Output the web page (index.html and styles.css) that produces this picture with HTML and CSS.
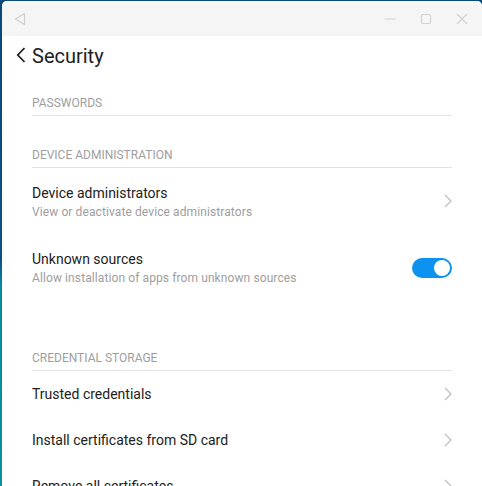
FILE: index.html
```html
<!DOCTYPE html>
<html lang="en">
<head>
  <meta charset="UTF-8">
  <title>Security</title>
  <link rel="stylesheet" href="styles.css">
</head>
<body>

<div class="window">
  <div class="titlebar">
    <svg class="tb-back" width="12" height="14" viewBox="0 0 12 14">
      <path d="M10.5 1.5 L1.5 7 L10.5 12.5 Z" fill="none" stroke="#cfcfcf" stroke-width="1.2" stroke-linejoin="round"/>
    </svg>
    <div class="tb-controls">
      <svg width="12" height="12" viewBox="0 0 12 12"><path d="M0.5 6 H11.5" stroke="#d2d2d2" stroke-width="1.2"/></svg>
      <svg width="12" height="12" viewBox="0 0 12 12"><rect x="1.5" y="1.5" width="9" height="9" rx="1.5" fill="none" stroke="#d2d2d2" stroke-width="1.2"/></svg>
      <svg width="12" height="12" viewBox="0 0 12 12"><path d="M1 1 L11 11 M11 1 L1 11" stroke="#d2d2d2" stroke-width="1.2"/></svg>
    </div>
  </div>

  <div class="header">
    <svg class="header-back" width="10" height="16" viewBox="0 0 10 16">
      <path d="M8.5 1 L1.8 8 L8.5 15" fill="none" stroke="#212121" stroke-width="1.8"/>
    </svg>
    <span class="header-title">Security</span>
  </div>

  <div class="prefs">
    <div class="category first">PASSWORDS</div>

    <div class="category">DEVICE ADMINISTRATION</div>
    <div class="pref two-line">
      <div class="pref-text">
        <div class="pref-title">Device administrators</div>
        <div class="pref-summary">View or deactivate device administrators</div>
      </div>
      <svg class="chevron" width="8" height="14" viewBox="0 0 8 14"><path d="M1 1 L7 7 L1 13" fill="none" stroke="#bdbdbd" stroke-width="1.2"/></svg>
    </div>
    <div class="pref two-line">
      <div class="pref-text">
        <div class="pref-title">Unknown sources</div>
        <div class="pref-summary">Allow installation of apps from unknown sources</div>
      </div>
      <div class="switch on"><div class="knob"></div></div>
    </div>

    <div class="category spaced">CREDENTIAL STORAGE</div>
    <div class="pref">
      <div class="pref-text">
        <div class="pref-title">Trusted credentials</div>
      </div>
      <svg class="chevron" width="8" height="14" viewBox="0 0 8 14"><path d="M1 1 L7 7 L1 13" fill="none" stroke="#bdbdbd" stroke-width="1.2"/></svg>
    </div>
    <div class="pref">
      <div class="pref-text">
        <div class="pref-title">Install certificates from SD card</div>
      </div>
      <svg class="chevron" width="8" height="14" viewBox="0 0 8 14"><path d="M1 1 L7 7 L1 13" fill="none" stroke="#bdbdbd" stroke-width="1.2"/></svg>
    </div>
    <div class="pref">
      <div class="pref-text">
        <div class="pref-title">Remove all certificates</div>
      </div>
      <svg class="chevron" width="8" height="14" viewBox="0 0 8 14"><path d="M1 1 L7 7 L1 13" fill="none" stroke="#bdbdbd" stroke-width="1.2"/></svg>
    </div>
  </div>
</div>

</body>
</html>
```

FILE: styles.css
```css
body {
  margin: 0;
  padding: 0;
  height: 486px;
  overflow: hidden;
  font-family: Roboto, "Noto Sans", sans-serif;
  background: linear-gradient(#0a4878 0, #0b5283 260px, #08899c 285px, #08919f 486px);
}
.window {
  margin: 1px 0 0 2px;
  height: 485px;
  background: #ffffff;
  border-radius: 5px 5px 0 0;
  overflow: hidden;
}
.titlebar {
  height: 35px;
  background: #f5f5f5;
  display: flex;
  align-items: center;
  justify-content: space-between;
  padding: 0 12px 0 12px;
}
.tb-back {
  margin-top: 1px;
}
.tb-controls {
  display: flex;
  gap: 24px;
  align-items: center;
  margin-right: 2px;
}
.header {
  height: 40px;
  display: flex;
  align-items: center;
  padding-left: 14px;
}
.header-back {
  margin-top: -2px;
}
.header-title {
  font-size: 20px;
  color: #212121;
  margin-left: 6px;
  margin-top: -1px;
}
.prefs {
  padding: 0 30px;
}
.category {
  font-size: 12px;
  line-height: 16px;
  color: #9e9e9e;
  padding: 31px 0 4px 0;
  border-bottom: 1px solid #e3e3e3;
}
.category.first {
  padding-top: 19px;
}
.category.spaced {
  padding-top: 50px;
}
.pref {
  height: 46px;
  display: flex;
  align-items: center;
}
.pref.two-line {
  height: 66px;
}
.pref-text {
  flex: 1;
}
.pref-title {
  font-size: 14px;
  line-height: 20px;
  color: #212121;
}
.pref-summary {
  font-size: 12px;
  line-height: 16px;
  color: #9e9e9e;
  letter-spacing: 0.1px;
  margin-top: 1px;
}
.switch {
  width: 40px;
  height: 20px;
  border-radius: 10px;
  background: #bdbdbd;
  display: flex;
  align-items: center;
  padding: 0 2px;
  box-sizing: border-box;
  margin-top: 2px;
}
.switch.on {
  background: #0b93ef;
  justify-content: flex-end;
}
.knob {
  width: 16px;
  height: 16px;
  border-radius: 50%;
  background: #ffffff;
}
```
